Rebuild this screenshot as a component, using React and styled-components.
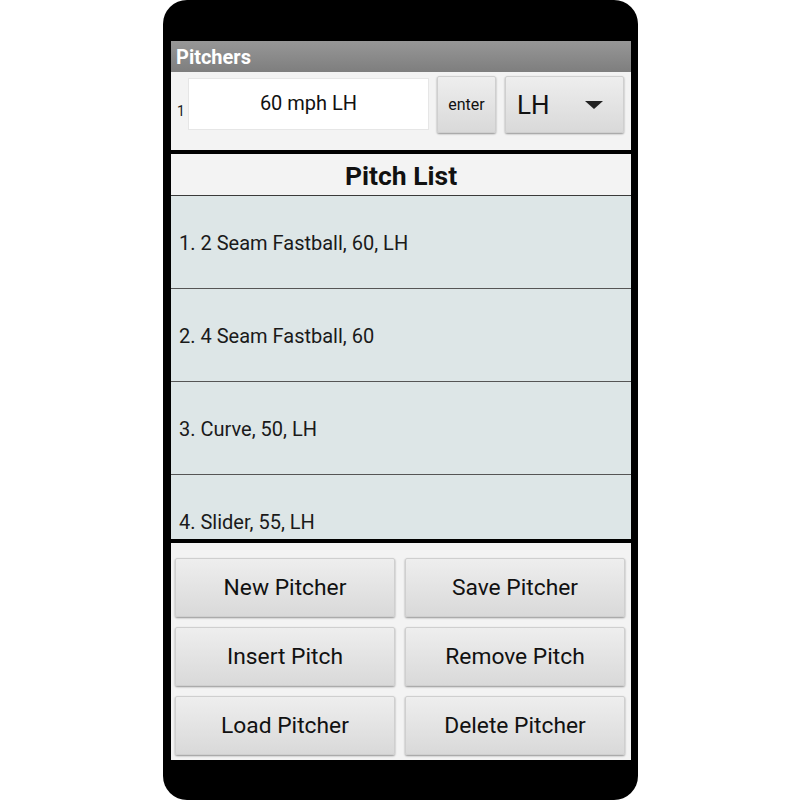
import React from 'react';
import styled, { createGlobalStyle } from 'styled-components';

const GlobalStyle = createGlobalStyle`
  body {
    margin: 0;
    background: #fff;
    font-family: Roboto, "Liberation Sans", sans-serif;
  }
`;

const Phone = styled.div`
  width: 475px;
  height: 800px;
  margin-left: 163px;
  box-sizing: border-box;
  padding: 41px 7px 40px 8px;
  background: #000;
  border-radius: 24px;
`;

const Screen = styled.div`
  height: 100%;
  display: flex;
  flex-direction: column;
  background: #f3f3f3;
`;

const TitleBar = styled.div`
  height: 31px;
  display: flex;
  align-items: center;
  padding-left: 5px;
  background: linear-gradient(#979797, #7e7e7e);
  color: #fff;
  font-size: 20px;
  font-weight: bold;
`;

const InputRow = styled.div`
  height: 78px;
  display: flex;
  align-items: flex-start;
  padding: 4px 7px 0 6px;
  box-sizing: border-box;
`;

const Index = styled.span`
  width: 11px;
  margin-top: 27px;
  font-size: 14px;
  color: #222;
`;

const TextBox = styled.div`
  width: 241px;
  height: 52px;
  margin-top: 2px;
  box-sizing: border-box;
  display: flex;
  justify-content: center;
  padding-top: 12px;
  background: #fff;
  border: 1px solid #e6e6e6;
  font-size: 20px;
  color: #111;
`;

const RaisedButton = styled.div`
  box-sizing: border-box;
  display: flex;
  align-items: center;
  justify-content: center;
  background: linear-gradient(#eeeeee, #d9d9d9);
  border: 1px solid #cfcfcf;
  border-radius: 2px;
  box-shadow: 0 1px 2px rgba(0, 0, 0, 0.4);
  color: #111;
  font-size: ${(p) => p.size || 22.8}px;
`;

const EnterButton = styled(RaisedButton)`
  width: 59px;
  height: 57px;
  margin-left: 8px;
`;

const Dropdown = styled(RaisedButton)`
  width: 119px;
  height: 57px;
  margin-left: 9px;
  justify-content: space-between;
  padding: 0 20px 0 11px;
  font-size: 26px;
`;

const Caret = styled.span`
  width: 0;
  height: 0;
  border-left: 9px solid transparent;
  border-right: 9px solid transparent;
  border-top: 8px solid #222;
`;

const ListHeader = styled.div`
  height: 39px;
  padding-top: 2px;
  display: flex;
  align-items: center;
  justify-content: center;
  border-top: 4px solid #000;
  border-bottom: 1.5px solid #3a3a3a;
  font-size: 26.5px;
  font-weight: bold;
  color: #111;
`;

const List = styled.div`
  height: 343px;
  overflow: hidden;
  background: #dde6e7;
`;

const Item = styled.div`
  height: 93px;
  display: flex;
  align-items: center;
  padding: 2px 0 0 8px;
  box-sizing: border-box;
  border-bottom: 1px solid #555;
  font-size: 20px;
  color: #1a1a1a;
`;

const ButtonGrid = styled.div`
  flex: 1;
  display: grid;
  grid-template-columns: 220px 220px;
  grid-auto-rows: 59px;
  column-gap: 10px;
  row-gap: 10px;
  padding: 15px 6px 0 4px;
  border-top: 4px solid #000;
`;

const pitches = [
  '1. 2 Seam Fastball, 60, LH',
  '2. 4 Seam Fastball, 60',
  '3. Curve, 50, LH',
  '4. Slider, 55, LH',
];

const actions = [
  'New Pitcher',
  'Save Pitcher',
  'Insert Pitch',
  'Remove Pitch',
  'Load Pitcher',
  'Delete Pitcher',
];

export default function App() {
  return (
    <>
      <GlobalStyle />
      <Phone>
        <Screen>
          <TitleBar>Pitchers</TitleBar>
          <InputRow>
            <Index>1</Index>
            <TextBox>60 mph LH</TextBox>
            <EnterButton size={16}>enter</EnterButton>
            <Dropdown>
              LH
              <Caret />
            </Dropdown>
          </InputRow>
          <ListHeader>Pitch List</ListHeader>
          <List>
            {pitches.map((p) => (
              <Item key={p}>{p}</Item>
            ))}
          </List>
          <ButtonGrid>
            {actions.map((a) => (
              <RaisedButton key={a}>{a}</RaisedButton>
            ))}
          </ButtonGrid>
        </Screen>
      </Phone>
    </>
  );
}
